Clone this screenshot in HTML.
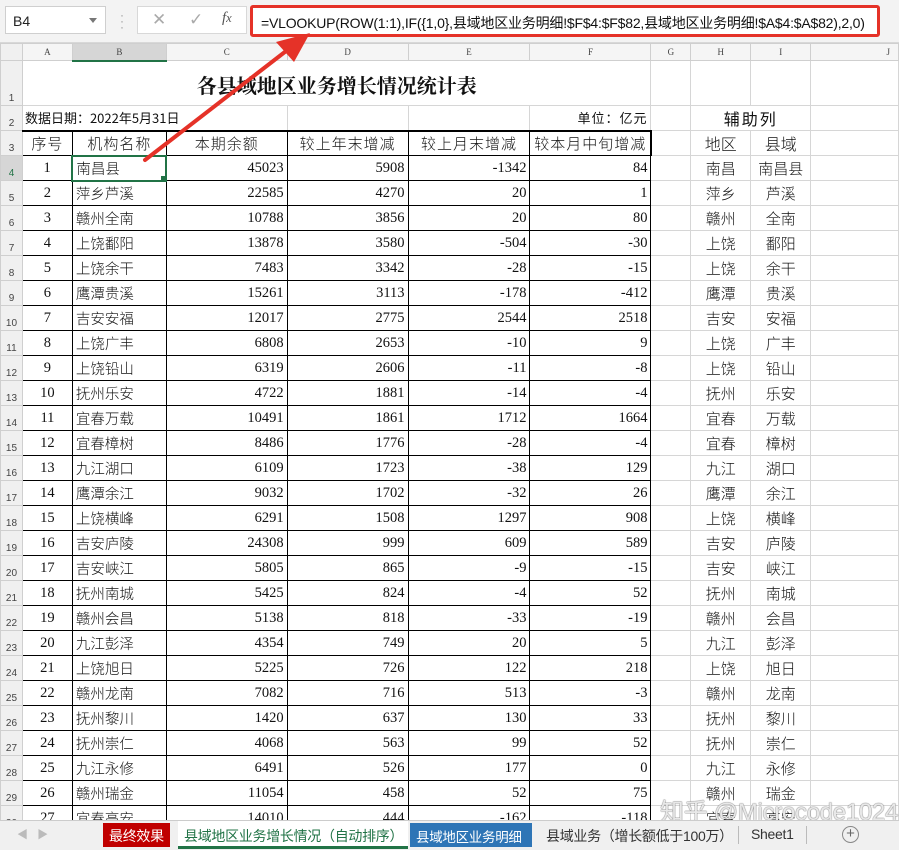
<!DOCTYPE html>
<html><head><meta charset="utf-8">
<style>
*{margin:0;padding:0;box-sizing:border-box}
body{width:899px;height:850px;overflow:hidden;background:#fff;position:relative;font-family:"Liberation Serif","Noto Serif CJK SC",serif}
.top{position:absolute;left:0;top:0;width:899px;height:43px;background:#f3f3f3;border-bottom:1px solid #d8d8d8}
.nb{position:absolute;left:5px;top:6px;width:101px;height:28px;background:#fff;border:1px solid #cfcfcf;font:14px "Liberation Sans",sans-serif;padding:6px 0 0 7px;color:#222}
.nb:after{content:"";position:absolute;right:8px;top:11px;border:4px solid transparent;border-top:5px solid #777}
.dots{position:absolute;left:120px;top:12px;color:#999;font:12px sans-serif;line-height:6px}
.fx{position:absolute;left:137px;top:6px;width:110px;height:28px;background:#fff;border:1px solid #d8d8d8;font:17px "Liberation Sans",sans-serif;color:#aaa}
.fb{position:absolute;left:250px;top:5px;width:630px;height:32px;border:3px solid #e53228;border-radius:3px;background:#fff;font:14px "Liberation Sans","Noto Sans CJK SC",sans-serif;padding:5px 0 0 8px;color:#111;white-space:nowrap;letter-spacing:-0.2px}
table{position:absolute;left:0;top:43px;border-collapse:collapse;table-layout:fixed}
td{border:1px solid #d6d6d6;white-space:nowrap;overflow:hidden;padding:0 3px;font-size:14px;color:#111}
td.rh{background:#f0f0f0;border-color:#cfcfcf;color:#444;font:10px "Liberation Sans",sans-serif;text-align:center;vertical-align:bottom;padding:0 0 1px 0}
tr.ch td{background:#f5f5f5;font:9px "Liberation Serif",serif;color:#444;text-align:center;border-color:#cfcfcf;padding:0}
td.k{border-color:#000}
.c{text-align:center}.r{text-align:right}
.cn{font-family:"Liberation Serif","Noto Sans CJK SC",sans-serif;font-size:15px;font-weight:300}
tr.d td.k{font-size:14.5px}
.hd td.k{font-family:"Noto Sans CJK SC",sans-serif;font-size:15px;letter-spacing:1px;text-align:center;font-weight:300}
.tabs{position:absolute;left:0;top:820px;width:899px;height:30px;background:#f0f0f0;border-top:1px solid #ccc;font:14px "Liberation Sans","Noto Sans CJK SC",sans-serif}
.tab{position:absolute;top:2px;height:24px;padding:3px 6px 0;white-space:nowrap;letter-spacing:-0.3px}
.wm{position:absolute;left:660px;top:792px;font:24px "Liberation Sans","Noto Sans CJK SC",sans-serif;color:rgba(255,255,255,.85);text-shadow:0 0 1px #666,0 0 1px #666;white-space:nowrap;letter-spacing:-0.3px}
</style></head><body>
<div class="top">
<div class="nb">B4</div>
<div class="dots">·<br>·<br>·</div>
<div class="fx"><span style="position:absolute;left:14px;top:3px">✕</span><span style="position:absolute;left:51px;top:3px">✓</span><span style="position:absolute;left:84px;top:3px;color:#555;font:italic 15px 'Liberation Serif',serif">f<small>x</small></span></div>
<div class="fb">=VLOOKUP(ROW(1:1),IF({1,0},县域地区业务明细!$F$4:$F$82,县域地区业务明细!$A$4:$A$82),2,0)</div>
</div>
<table>
<colgroup><col style="width:22px"><col style="width:50px"><col style="width:94px"><col style="width:121px"><col style="width:121px"><col style="width:122px"><col style="width:121px"><col style="width:40px"><col style="width:60px"><col style="width:60px"><col style="width:88px"></colgroup>
<tr class="ch" style="height:17px"><td style="background:#f0f0f0"></td><td>A</td><td style="background:#d6d6d6;border-bottom:2px solid #217346">B</td><td>C</td><td>D</td><td>E</td><td>F</td><td>G</td><td>H</td><td>I</td><td style="text-align:right;padding-right:8px">J</td></tr>
<tr style="height:45px"><td class="rh">1</td><td colspan="6" style="text-align:center;font:bold 20px 'Liberation Serif','Noto Serif CJK SC',serif;padding-top:2px">各县域地区业务增长情况统计表</td><td></td><td></td><td></td><td></td></tr>
<tr style="height:20px"><td class="rh">2</td><td colspan="3" style="font:13px 'Noto Sans CJK SC',sans-serif;padding-left:2px">数据日期：2022年5月31日</td><td></td><td></td><td class="r" style="font:13px 'Noto Sans CJK SC',sans-serif;letter-spacing:1px">单位：亿元</td><td></td><td colspan="2" class="c" style="font:16px 'Noto Sans CJK SC',sans-serif;letter-spacing:2px">辅助列</td><td></td></tr>
<tr class="hd" style="height:25px"><td class="rh">3</td><td class="k" style="border-top:2px solid #000">序号</td><td class="k" style="border-top:2px solid #000">机构名称</td><td class="k" style="border-top:2px solid #000">本期余额</td><td class="k" style="border-top:2px solid #000">较上年末增减</td><td class="k" style="border-top:2px solid #000">较上月末增减</td><td class="k" style="border-top:2px solid #000;border-right:2px solid #000">较本月中旬增减</td><td></td><td class="c cn" style="font-size:16px">地区</td><td class="c cn" style="font-size:16px">县域</td><td></td></tr>
<tr class="d" style="height:25px"><td class="rh" style="background:#d6d6d6;color:#217346">4</td><td class="k c">1</td><td class="k cn" style="border:2px solid #217346;position:relative">南昌县<span style="position:absolute;right:-1px;bottom:-1px;width:5px;height:5px;background:#217346"></span></td><td class="k r">45023</td><td class="k r">5908</td><td class="k r">-1342</td><td class="k r">84</td><td></td><td class="c cn">南昌</td><td class="c cn">南昌县</td><td></td></tr>
<tr class="d" style="height:25px"><td class="rh">5</td><td class="k c">2</td><td class="k cn">萍乡芦溪</td><td class="k r">22585</td><td class="k r">4270</td><td class="k r">20</td><td class="k r">1</td><td></td><td class="c cn">萍乡</td><td class="c cn">芦溪</td><td></td></tr>
<tr class="d" style="height:25px"><td class="rh">6</td><td class="k c">3</td><td class="k cn">赣州全南</td><td class="k r">10788</td><td class="k r">3856</td><td class="k r">20</td><td class="k r">80</td><td></td><td class="c cn">赣州</td><td class="c cn">全南</td><td></td></tr>
<tr class="d" style="height:25px"><td class="rh">7</td><td class="k c">4</td><td class="k cn">上饶鄱阳</td><td class="k r">13878</td><td class="k r">3580</td><td class="k r">-504</td><td class="k r">-30</td><td></td><td class="c cn">上饶</td><td class="c cn">鄱阳</td><td></td></tr>
<tr class="d" style="height:25px"><td class="rh">8</td><td class="k c">5</td><td class="k cn">上饶余干</td><td class="k r">7483</td><td class="k r">3342</td><td class="k r">-28</td><td class="k r">-15</td><td></td><td class="c cn">上饶</td><td class="c cn">余干</td><td></td></tr>
<tr class="d" style="height:25px"><td class="rh">9</td><td class="k c">6</td><td class="k cn">鹰潭贵溪</td><td class="k r">15261</td><td class="k r">3113</td><td class="k r">-178</td><td class="k r">-412</td><td></td><td class="c cn">鹰潭</td><td class="c cn">贵溪</td><td></td></tr>
<tr class="d" style="height:25px"><td class="rh">10</td><td class="k c">7</td><td class="k cn">吉安安福</td><td class="k r">12017</td><td class="k r">2775</td><td class="k r">2544</td><td class="k r">2518</td><td></td><td class="c cn">吉安</td><td class="c cn">安福</td><td></td></tr>
<tr class="d" style="height:25px"><td class="rh">11</td><td class="k c">8</td><td class="k cn">上饶广丰</td><td class="k r">6808</td><td class="k r">2653</td><td class="k r">-10</td><td class="k r">9</td><td></td><td class="c cn">上饶</td><td class="c cn">广丰</td><td></td></tr>
<tr class="d" style="height:25px"><td class="rh">12</td><td class="k c">9</td><td class="k cn">上饶铅山</td><td class="k r">6319</td><td class="k r">2606</td><td class="k r">-11</td><td class="k r">-8</td><td></td><td class="c cn">上饶</td><td class="c cn">铅山</td><td></td></tr>
<tr class="d" style="height:25px"><td class="rh">13</td><td class="k c">10</td><td class="k cn">抚州乐安</td><td class="k r">4722</td><td class="k r">1881</td><td class="k r">-14</td><td class="k r">-4</td><td></td><td class="c cn">抚州</td><td class="c cn">乐安</td><td></td></tr>
<tr class="d" style="height:25px"><td class="rh">14</td><td class="k c">11</td><td class="k cn">宜春万载</td><td class="k r">10491</td><td class="k r">1861</td><td class="k r">1712</td><td class="k r">1664</td><td></td><td class="c cn">宜春</td><td class="c cn">万载</td><td></td></tr>
<tr class="d" style="height:25px"><td class="rh">15</td><td class="k c">12</td><td class="k cn">宜春樟树</td><td class="k r">8486</td><td class="k r">1776</td><td class="k r">-28</td><td class="k r">-4</td><td></td><td class="c cn">宜春</td><td class="c cn">樟树</td><td></td></tr>
<tr class="d" style="height:25px"><td class="rh">16</td><td class="k c">13</td><td class="k cn">九江湖口</td><td class="k r">6109</td><td class="k r">1723</td><td class="k r">-38</td><td class="k r">129</td><td></td><td class="c cn">九江</td><td class="c cn">湖口</td><td></td></tr>
<tr class="d" style="height:25px"><td class="rh">17</td><td class="k c">14</td><td class="k cn">鹰潭余江</td><td class="k r">9032</td><td class="k r">1702</td><td class="k r">-32</td><td class="k r">26</td><td></td><td class="c cn">鹰潭</td><td class="c cn">余江</td><td></td></tr>
<tr class="d" style="height:25px"><td class="rh">18</td><td class="k c">15</td><td class="k cn">上饶横峰</td><td class="k r">6291</td><td class="k r">1508</td><td class="k r">1297</td><td class="k r">908</td><td></td><td class="c cn">上饶</td><td class="c cn">横峰</td><td></td></tr>
<tr class="d" style="height:25px"><td class="rh">19</td><td class="k c">16</td><td class="k cn">吉安庐陵</td><td class="k r">24308</td><td class="k r">999</td><td class="k r">609</td><td class="k r">589</td><td></td><td class="c cn">吉安</td><td class="c cn">庐陵</td><td></td></tr>
<tr class="d" style="height:25px"><td class="rh">20</td><td class="k c">17</td><td class="k cn">吉安峡江</td><td class="k r">5805</td><td class="k r">865</td><td class="k r">-9</td><td class="k r">-15</td><td></td><td class="c cn">吉安</td><td class="c cn">峡江</td><td></td></tr>
<tr class="d" style="height:25px"><td class="rh">21</td><td class="k c">18</td><td class="k cn">抚州南城</td><td class="k r">5425</td><td class="k r">824</td><td class="k r">-4</td><td class="k r">52</td><td></td><td class="c cn">抚州</td><td class="c cn">南城</td><td></td></tr>
<tr class="d" style="height:25px"><td class="rh">22</td><td class="k c">19</td><td class="k cn">赣州会昌</td><td class="k r">5138</td><td class="k r">818</td><td class="k r">-33</td><td class="k r">-19</td><td></td><td class="c cn">赣州</td><td class="c cn">会昌</td><td></td></tr>
<tr class="d" style="height:25px"><td class="rh">23</td><td class="k c">20</td><td class="k cn">九江彭泽</td><td class="k r">4354</td><td class="k r">749</td><td class="k r">20</td><td class="k r">5</td><td></td><td class="c cn">九江</td><td class="c cn">彭泽</td><td></td></tr>
<tr class="d" style="height:25px"><td class="rh">24</td><td class="k c">21</td><td class="k cn">上饶旭日</td><td class="k r">5225</td><td class="k r">726</td><td class="k r">122</td><td class="k r">218</td><td></td><td class="c cn">上饶</td><td class="c cn">旭日</td><td></td></tr>
<tr class="d" style="height:25px"><td class="rh">25</td><td class="k c">22</td><td class="k cn">赣州龙南</td><td class="k r">7082</td><td class="k r">716</td><td class="k r">513</td><td class="k r">-3</td><td></td><td class="c cn">赣州</td><td class="c cn">龙南</td><td></td></tr>
<tr class="d" style="height:25px"><td class="rh">26</td><td class="k c">23</td><td class="k cn">抚州黎川</td><td class="k r">1420</td><td class="k r">637</td><td class="k r">130</td><td class="k r">33</td><td></td><td class="c cn">抚州</td><td class="c cn">黎川</td><td></td></tr>
<tr class="d" style="height:25px"><td class="rh">27</td><td class="k c">24</td><td class="k cn">抚州崇仁</td><td class="k r">4068</td><td class="k r">563</td><td class="k r">99</td><td class="k r">52</td><td></td><td class="c cn">抚州</td><td class="c cn">崇仁</td><td></td></tr>
<tr class="d" style="height:25px"><td class="rh">28</td><td class="k c">25</td><td class="k cn">九江永修</td><td class="k r">6491</td><td class="k r">526</td><td class="k r">177</td><td class="k r">0</td><td></td><td class="c cn">九江</td><td class="c cn">永修</td><td></td></tr>
<tr class="d" style="height:25px"><td class="rh">29</td><td class="k c">26</td><td class="k cn">赣州瑞金</td><td class="k r">11054</td><td class="k r">458</td><td class="k r">52</td><td class="k r">75</td><td></td><td class="c cn">赣州</td><td class="c cn">瑞金</td><td></td></tr>
<tr class="d" style="height:25px"><td class="rh">30</td><td class="k c">27</td><td class="k cn">宜春高安</td><td class="k r">14010</td><td class="k r">444</td><td class="k r">-162</td><td class="k r">-118</td><td></td><td class="c cn">宜春</td><td class="c cn">高安</td><td></td></tr>
</table>
<svg style="position:absolute;left:0;top:0" width="899" height="850">
<line x1="145" y1="160" x2="290" y2="48" stroke="#e53228" stroke-width="4" stroke-linecap="round"/>
<polygon points="310,33 276,42 294,62" fill="#e53228"/>
</svg>
<div class="wm">知乎 @Microcode1024</div>
<div class="tabs">
<span style="position:absolute;left:17px;top:5px;color:#bbb;font-size:11px">◀ &nbsp; ▶</span>
<div class="tab" style="left:103px;width:67px;background:#c00000;color:#fff">最终效果</div>
<div class="tab" style="left:178px;width:230px;background:#fff;color:#217346;border-bottom:3px solid #217346;top:0;height:28px;padding-top:5px">县域地区业务增长情况（自动排序）</div>
<div class="tab" style="left:410px;width:122px;background:#2e75b6;color:#fff;font-size:13.5px">县域地区业务明细</div>
<div class="tab" style="left:540px;color:#333">县域业务（增长额低于100万）</div>
<div style="position:absolute;left:738px;top:5px;width:1px;height:18px;background:#bbb"></div>
<div class="tab" style="left:745px;color:#333">Sheet1</div>
<div style="position:absolute;left:806px;top:5px;width:1px;height:18px;background:#bbb"></div>
<div style="position:absolute;left:842px;top:5px;width:17px;height:17px;border:1px solid #888;border-radius:50%;text-align:center;line-height:14px;color:#666;font-size:15px">+</div>
</div>
</body></html>
